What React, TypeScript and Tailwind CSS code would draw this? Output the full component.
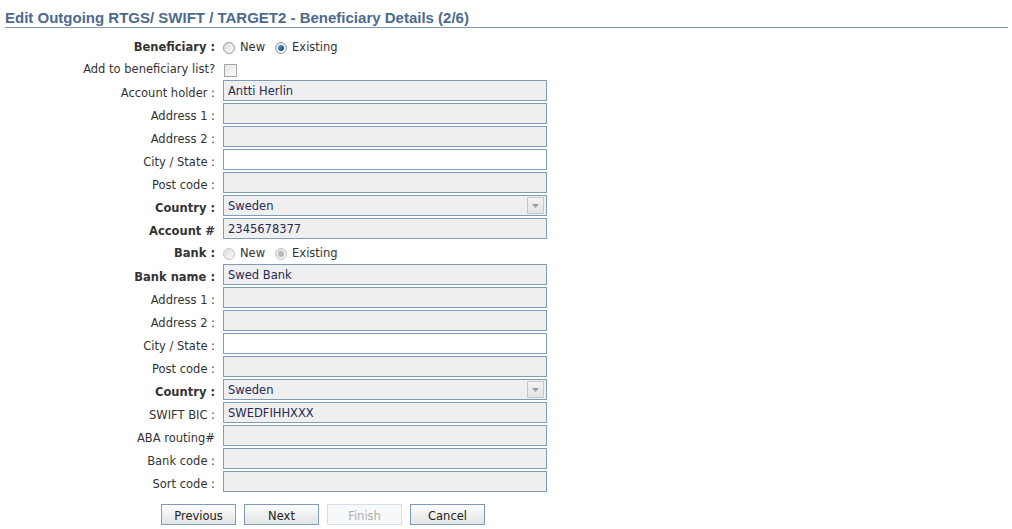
import React from 'react'

const labelFont = { fontFamily: 'Verdana, "DejaVu Sans", sans-serif' }

type Field = {
  label: string
  value?: string
  bold?: boolean
  white?: boolean
  select?: boolean
}

const beneficiaryFields: Field[] = [
  { label: 'Account holder :', value: 'Antti Herlin' },
  { label: 'Address 1 :' },
  { label: 'Address 2 :' },
  { label: 'City / State :', white: true },
  { label: 'Post code :' },
  { label: 'Country :', value: 'Sweden', bold: true, select: true },
  { label: 'Account #', value: '2345678377', bold: true },
]

const bankFields: Field[] = [
  { label: 'Bank name :', value: 'Swed Bank', bold: true },
  { label: 'Address 1 :' },
  { label: 'Address 2 :' },
  { label: 'City / State :', white: true },
  { label: 'Post code :' },
  { label: 'Country :', value: 'Sweden', bold: true, select: true },
  { label: 'SWIFT BIC :', value: 'SWEDFIHHXXX' },
  { label: 'ABA routing#' },
  { label: 'Bank code :' },
  { label: 'Sort code :' },
]

function Label({ children, bold }: { children: React.ReactNode; bold?: boolean }) {
  return (
    <div
      className={`w-[223px] shrink-0 pr-[8px] text-right text-[11.5px] text-[#333] ${bold ? 'font-bold' : ''}`}
    >
      {children}
    </div>
  )
}

function Radio({ checked, disabled }: { checked?: boolean; disabled?: boolean }) {
  return (
    <span
      className={`relative inline-block h-[12px] w-[12px] rounded-full border ${
        disabled ? 'border-[#c4c4c4]' : 'border-[#9a9a9a]'
      } bg-gradient-to-br from-[#dcdcdc] to-[#fafafa]`}
    >
      {checked && (
        <span
          className={`absolute left-[2px] top-[2px] h-[6px] w-[6px] rounded-full ${
            disabled ? 'bg-[#b8b8b8]' : 'bg-gradient-to-br from-[#5aa7e0] to-[#0b3d6e]'
          }`}
        />
      )}
    </span>
  )
}

function RadioChoice({ existing, disabled }: { existing: boolean; disabled?: boolean }) {
  return (
    <div className="flex items-center text-[11.5px] text-[#333]">
      <Radio disabled={disabled} />
      <span className="ml-[5px]">New</span>
      <span className="ml-[10px] flex items-center">
        <Radio checked={existing} disabled={disabled} />
        <span className="ml-[5px]">Existing</span>
      </span>
    </div>
  )
}

function InputRow({ f }: { f: Field }) {
  return (
    <div className="flex h-[23px] items-start">
      <div className="flex h-[21px] items-center pt-[7px]">
        <Label bold={f.bold}>{f.label}</Label>
      </div>
      <div
        className={`relative flex h-[21px] w-[324px] items-center border border-[#7f9db9] pl-[4px] pt-[2px] text-[11.5px] text-[#2a2a55] ${
          f.white ? 'bg-white' : 'bg-[#efefef]'
        }`}
      >
        <span>{f.value}</span>
        {f.select && (
          <span className="absolute right-[2px] top-[1px] flex h-[17px] w-[17px] items-center justify-center border border-[#c8c8c8] bg-gradient-to-b from-[#f4f4f4] to-[#e4e4e4]">
            <svg width="7" height="4" viewBox="0 0 7 4">
              <path d="M0 0h7L3.5 4z" fill="#a0a0a0" />
            </svg>
          </span>
        )}
      </div>
    </div>
  )
}

function Button({ children, disabled }: { children: React.ReactNode; disabled?: boolean }) {
  return (
    <button
      className={`h-[21px] w-[75px] border pt-[3px] text-[11.5px] leading-[14px] ${
        disabled
          ? 'border-[#d3dfe9] bg-[#f7f8f9] text-[#b0b0b0]'
          : 'border-[#7c9cbf] bg-gradient-to-b from-[#ffffff] via-[#f0f0f0] to-[#e2e4e6] text-[#222]'
      }`}
      style={labelFont}
    >
      {children}
    </button>
  )
}

export default function App() {
  return (
    <div className="min-h-[529px] w-[1012px] bg-white" style={labelFont}>
      <div className="ml-[5px] mr-[4px] h-[28px] border-b border-[#7f97b0] pt-[9px]">
        <h1
          className="text-[15px] font-bold leading-[17px] text-[#4d6a8e]"
          style={{ fontFamily: '"Liberation Sans", Arial, sans-serif' }}
        >
          Edit Outgoing RTGS/ SWIFT / TARGET2 - Beneficiary Details (2/6)
        </h1>
      </div>

      <div className="pt-[8px]">
        <div className="flex h-[22px] items-center pt-[2px]">
          <Label bold>Beneficiary :</Label>
          <RadioChoice existing />
        </div>
        <div className="flex h-[22px] items-center pt-[2px]">
          <Label>Add to beneficiary list?</Label>
          <span className="ml-[1px] inline-block h-[13px] w-[13px] border border-[#a5a5a5] bg-gradient-to-br from-[#e6e6e6] to-[#fbfbfb]" />
        </div>
        {beneficiaryFields.map((f, i) => (
          <InputRow key={'b' + i} f={f} />
        ))}
        <div className="flex h-[23px] items-center pt-[3px]">
          <Label bold>Bank :</Label>
          <RadioChoice existing disabled />
        </div>
        {bankFields.map((f, i) => (
          <InputRow key={'k' + i} f={f} />
        ))}
      </div>

      <div className="ml-[161px] mt-[10px] flex gap-[8px]">
        <Button>Previous</Button>
        <Button>Next</Button>
        <Button disabled>Finish</Button>
        <Button>Cancel</Button>
      </div>
    </div>
  )
}
